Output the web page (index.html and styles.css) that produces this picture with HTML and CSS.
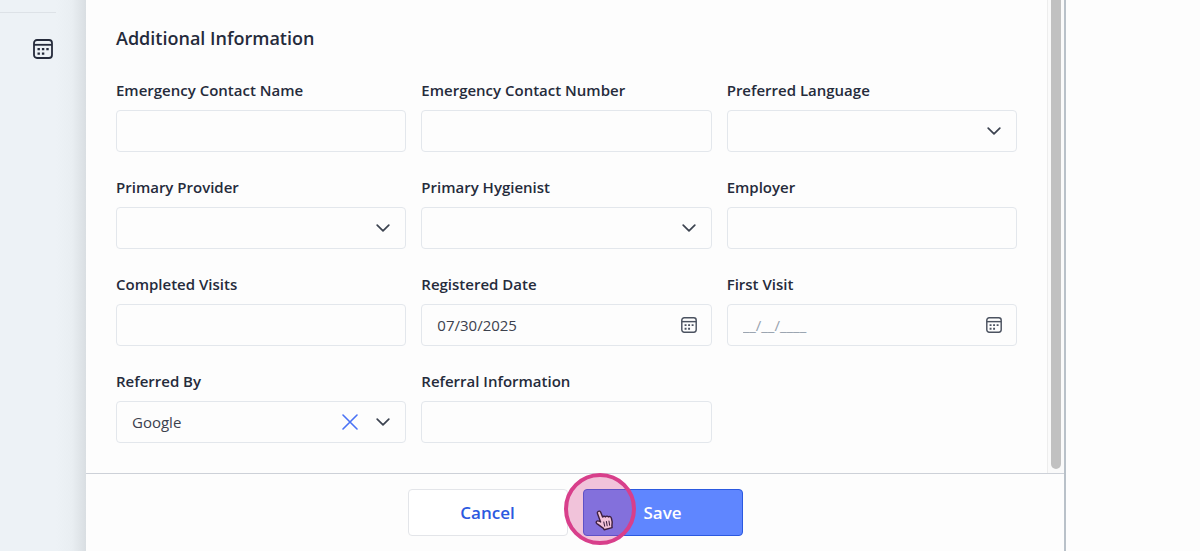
FILE: index.html
```html
<!DOCTYPE html>
<html lang="en">
<head>
    <meta charset="UTF-8">
    <meta name="viewport" content="width=device-width, initial-scale=1.0">
    <title>Patient - Additional Information</title>
    <link rel="stylesheet" href="styles.css">
</head>
<body>
    <!-- Shared icons -->
    <svg class="sprite" aria-hidden="true">
        <symbol id="icon-calendar" viewBox="0 0 20 20">
            <rect x="1" y="1" width="18" height="18" rx="3" fill="none" stroke="currentColor" stroke-width="1.8"/>
            <path d="M1 5.8h18" fill="none" stroke="currentColor" stroke-width="1.8"/>
            <path d="M4.500 9h2.400v2.300H4.500zM8.900 9h2.400v2.300H8.900zM13.300 9h2.400v2.300h-2.400zM4.500 13.500h2.400v2.300H4.500zM8.900 13.500h2.400v2.300H8.900z" fill="currentColor"/>
        </symbol>
        <symbol id="icon-chevron" viewBox="0 0 14 8">
            <path d="M1.2 1.2L7 6.8l5.800-5.600" fill="none" stroke="currentColor" stroke-width="1.7" stroke-linecap="round" stroke-linejoin="round"/>
        </symbol>
    </svg>

    <div class="layout">
        <nav class="sidebar">
            <a href="#" class="sidebar-link" aria-label="Calendar">
                <svg><use href="#icon-calendar"/></svg>
            </a>
        </nav>

        <form class="drawer">
            <div class="drawer-body">
                <section class="drawer-content">
                    <h2>Additional Information</h2>
                    <div class="fields">
                        <div class="field">
                            <label for="emergency-name">Emergency Contact Name</label>
                            <div class="control">
                                <input type="text" id="emergency-name">
                            </div>
                        </div>
                        <div class="field">
                            <label for="emergency-number">Emergency Contact Number</label>
                            <div class="control">
                                <input type="text" id="emergency-number">
                            </div>
                        </div>
                        <div class="field">
                            <label for="language">Preferred Language</label>
                            <div class="control">
                                <select id="language"><option></option></select>
                                <svg class="chevron"><use href="#icon-chevron"/></svg>
                            </div>
                        </div>
                        <div class="field">
                            <label for="provider">Primary Provider</label>
                            <div class="control">
                                <select id="provider"><option></option></select>
                                <svg class="chevron"><use href="#icon-chevron"/></svg>
                            </div>
                        </div>
                        <div class="field">
                            <label for="hygienist">Primary Hygienist</label>
                            <div class="control">
                                <select id="hygienist"><option></option></select>
                                <svg class="chevron"><use href="#icon-chevron"/></svg>
                            </div>
                        </div>
                        <div class="field">
                            <label for="employer">Employer</label>
                            <div class="control">
                                <input type="text" id="employer">
                            </div>
                        </div>
                        <div class="field">
                            <label for="visits">Completed Visits</label>
                            <div class="control">
                                <input type="text" id="visits">
                            </div>
                        </div>
                        <div class="field">
                            <label for="registered">Registered Date</label>
                            <div class="control">
                                <input type="text" id="registered" value="07/30/2025">
                                <button type="button" class="date-btn" aria-label="Pick registered date">
                                    <svg><use href="#icon-calendar"/></svg>
                                </button>
                            </div>
                        </div>
                        <div class="field">
                            <label for="first-visit">First Visit</label>
                            <div class="control">
                                <input type="text" id="first-visit" placeholder="__/__/____">
                                <button type="button" class="date-btn" aria-label="Pick first visit">
                                    <svg><use href="#icon-calendar"/></svg>
                                </button>
                            </div>
                        </div>
                        <div class="field">
                            <label for="referred-by">Referred By</label>
                            <div class="control">
                                <select id="referred-by"><option>Google</option></select>
                                <button type="button" class="clear-btn" aria-label="Clear">
                                    <svg viewBox="0 0 16 16"><path d="M1 1l14 14M15 1L1 15" fill="none" stroke="currentColor" stroke-width="1.6" stroke-linecap="round"/></svg>
                                </button>
                                <svg class="chevron"><use href="#icon-chevron"/></svg>
                            </div>
                        </div>
                        <div class="field">
                            <label for="referral-info">Referral Information</label>
                            <div class="control">
                                <input type="text" id="referral-info">
                            </div>
                        </div>
                    </div>
                </section>
                <div class="scroll-track">
                    <div class="scroll-thumb"></div>
                </div>
            </div>

            <div class="drawer-footer">
                <button type="button" class="btn btn-cancel">Cancel</button>
                <div class="save-wrap">
                    <button type="submit" class="btn btn-save">Save</button>
                    <!-- Click highlight with pointer -->
                    <div class="click-marker">
                        <svg class="pointer" viewBox="0 0 20 22">
                            <path d="M3.200 1.500C4.200.7 5.500 1.200 6 2.400L8 7.400C8.600 6.300 10.300 6.100 11 7.300C11.700 6.200 13.300 6 14.100 7.300C15.200 6.400 16.800 6.900 17.200 8.400C18.300 11.500 18.500 13.500 17.800 16.500L18 18.500L9.800 20.800L8.600 19C6 17.500 4 15.400 1.900 14.200C.7 13.300 1.200 11.500 2.800 11.400C4 11.300 5 12 5.900 12.500L2.600 3.600C2.300 2.800 2.500 2 3.200 1.500Z" fill="#f3c3d9" stroke="#3d1f3f" stroke-width="1.5" stroke-linejoin="round"/>
                            <path d="M9.200 12.500l1 4.500M12 12l.8 4.500M14.700 11.500l.7 4.500" fill="none" stroke="#3d1f3f" stroke-width="1.100" stroke-linecap="round"/>
                        </svg>
                    </div>
                </div>
            </div>
        </form>

        <div class="page-rest"></div>
    </div>
</body>
</html>
```

FILE: styles.css
```css
* {
    box-sizing: border-box;
}

body {
    margin: 0;
    font-family: "Open Sans", "Noto Sans", sans-serif;
    color: #252b3b;
    background: #fdfdfd;
}

.sprite {
    display: none;
}

.layout {
    display: flex;
    min-height: 100vh;
}

.sidebar {
    width: 86px;
    padding-top: 12px;
    background: linear-gradient(to right, #edf2f6 56px, #e9eef2 72px, #d9dee2 100%);
}

.sidebar::before {
    content: "";
    display: block;
    width: 56px;
    height: 1px;
    background: #dde2e7;
}

.sidebar-link {
    display: block;
    width: 20px;
    height: 20px;
    margin: 26px 0 0 33px;
    color: #252b3b;
}

.sidebar-link svg {
    display: block;
    width: 20px;
    height: 20px;
}

.drawer {
    flex: 1;
    display: flex;
    flex-direction: column;
    background: #fdfdfd;
    border-right: 2px solid #b9c1c9;
}

.drawer-body {
    display: flex;
    border-bottom: 1px solid #cdd1d8;
}

.drawer-content {
    flex: 1;
    padding: 26px 30px 30px;
}

h2 {
    margin: 0 0 29px;
    font-size: 18px;
    line-height: 24px;
    font-weight: 600;
}

.fields {
    display: grid;
    grid-template-columns: repeat(3, 1fr);
    gap: 24px 15px;
}

.field label {
    display: block;
    margin-bottom: 9px;
    font-size: 15px;
    line-height: 22px;
    font-weight: 600;
}

.control {
    position: relative;
}

.control input,
.control select {
    display: block;
    width: 100%;
    height: 42px;
    padding: 0 15px;
    border: 1px solid #e3e7ec;
    border-radius: 4px;
    background: #fdfdfd;
    font-family: inherit;
    font-size: 15px;
    color: #3c414d;
    appearance: none;
}

.control input::placeholder {
    color: #98a3af;
    opacity: 1;
}

.chevron {
    position: absolute;
    top: 17px;
    right: 16px;
    width: 14px;
    height: 8px;
    color: #3c4350;
    pointer-events: none;
}

.date-btn,
.clear-btn {
    position: absolute;
    top: 13px;
    right: 15px;
    width: 16px;
    height: 16px;
    padding: 0;
    border: none;
    background: none;
    color: #4b5260;
    cursor: pointer;
}

.clear-btn {
    right: 48px;
    color: #4a72f5;
}

.date-btn svg,
.clear-btn svg {
    display: block;
    width: 16px;
    height: 16px;
}

.scroll-track {
    width: 17px;
    padding: 0 3px 4px;
    border-left: 1px solid #ededed;
    background: #fafafa;
}

.scroll-thumb {
    width: 10px;
    height: 100%;
    border-radius: 0 0 5px 5px;
    background: #c1c1c1;
}

.drawer-footer {
    display: flex;
    justify-content: center;
    gap: 15px;
    padding: 15px;
}

.btn {
    display: block;
    width: 160px;
    height: 47px;
    border: 1px solid #e3e5e9;
    border-radius: 4px;
    background: #fff;
    color: #2b59e0;
    font-family: inherit;
    font-size: 17px;
    font-weight: 600;
    cursor: pointer;
}

.btn-save {
    border-color: #2b59e0;
    background: #5f86ff;
    color: #fff;
}

.save-wrap {
    position: relative;
}

.click-marker {
    position: absolute;
    top: -16px;
    left: -19px;
    width: 72px;
    height: 72px;
    border: 4px solid #d83f8b;
    border-radius: 50%;
    background: rgba(216, 63, 139, 0.3);
    pointer-events: none;
}

.pointer {
    position: absolute;
    top: 33px;
    left: 27px;
    width: 19px;
    height: 21px;
}

.page-rest {
    width: 134px;
}
```
